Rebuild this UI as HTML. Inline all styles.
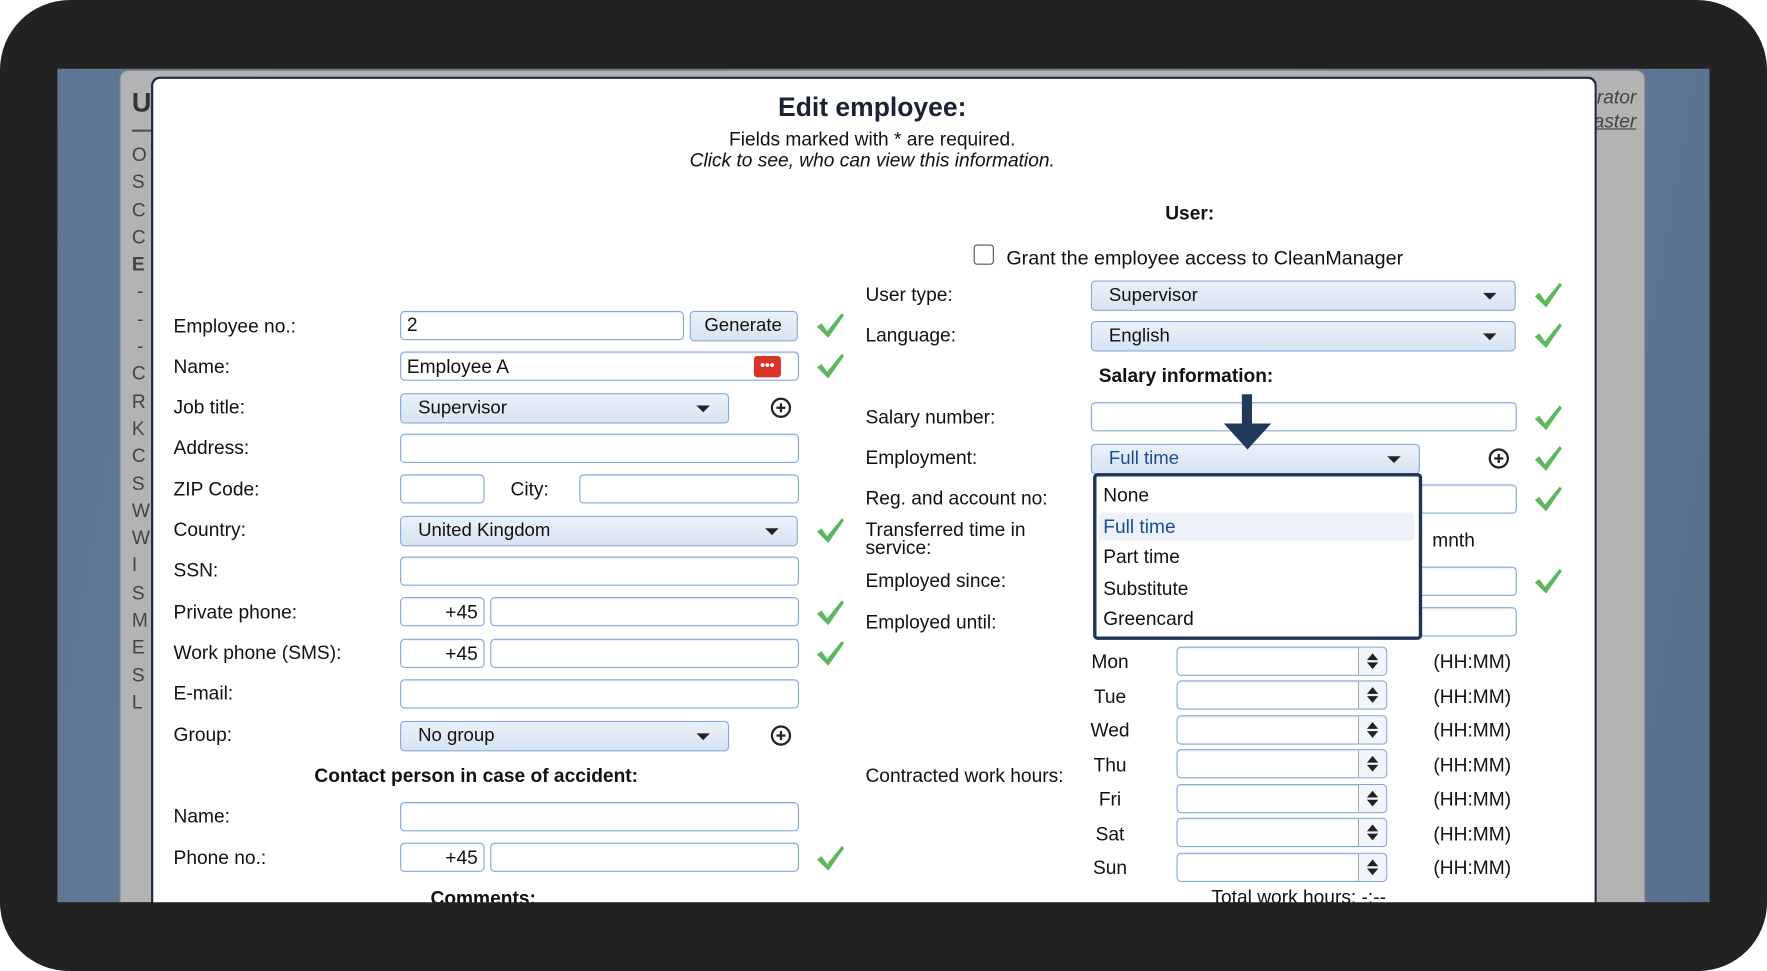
<!DOCTYPE html>
<html><head><meta charset="utf-8"><style>
html,body{margin:0;padding:0;width:1767px;height:971px;overflow:hidden;background:#fff}
#w{position:absolute;left:0;top:0;width:1568px;height:862px;transform:scale(1.12691,1.12645);transform-origin:0 0;font-family:"Liberation Sans",sans-serif;color:#111}
.a{position:absolute}
.frame{left:0;top:0;width:1568px;height:862px;background:#222;border-radius:62px}
.screen{left:51px;top:61px;width:1466px;height:740px;background:linear-gradient(100deg,#5d7594,#6d83a0 60%,#586f8e);overflow:hidden}
.page{left:55px;top:1px;width:1352px;height:760px;background:#b3b3b3;border-radius:8px 8px 0 0;border:1px solid #888}
.modal{left:134px;top:68px;width:1279px;height:740px;background:#fff;border:2px solid #1d2b44;border-bottom:none;border-radius:8px 8px 0 0}
.l{position:absolute;font-size:17px;line-height:18px;white-space:nowrap}
.in{position:absolute;height:24px;border:1px solid #86a7dd;border-radius:4px;background:#fff;box-shadow:inset 0 1px 1px #e8eef8}
.sel{position:absolute;border:1px solid #86a7dd;border-radius:4px;background:linear-gradient(#eaf1fa,#d8e4f3);font-size:16.5px;line-height:25px;padding-left:15px;box-sizing:border-box;height:27px}
.dd:after{content:"";position:absolute;right:16px;top:10px;border-left:6px solid transparent;border-right:6px solid transparent;border-top:6px solid #222}
.pl{position:absolute;width:18px;height:18px;border:2px solid #222;border-radius:50%;box-sizing:border-box}
.pl:before{content:"";position:absolute;left:3px;top:6px;width:8px;height:2px;background:#222}
.pl:after{content:"";position:absolute;left:6px;top:3px;width:2px;height:8px;background:#222}
.sp{position:absolute;right:0;top:0;width:24px;height:100%;border-left:1px solid #9ab;background:#f2f5fa;border-radius:0 4px 4px 0}
.sp:before{content:"";position:absolute;left:7px;top:5px;border-left:5px solid transparent;border-right:5px solid transparent;border-bottom:6px solid #222}
.sp:after{content:"";position:absolute;left:7px;bottom:5px;border-left:5px solid transparent;border-right:5px solid transparent;border-top:6px solid #222}
.b{font-weight:bold}
</style></head><body><div id="w">
<div class="a frame"></div>
<div class="a screen">
 <div class="a page">
  <div class="l b" style="left:10px;top:20px;font-size:24px;color:#333">U</div>
  <div class="a" style="left:10px;top:52px;width:20px;height:2px;background:#555"></div>
  <div class="l" style="left:10px;top:63px;color:#444;line-height:24.3px;font-size:17px">O<br>S<br>C<br>C<br><b>E</b><br>&nbsp;-<br>&nbsp;-<br>&nbsp;-<br>C<br>R<br>K<br>C<br>S<br>W<br>W<br>I<br>S<br>M<br>E<br>S<br>L</div>
  <div class="l" style="left:1305px;top:13px;font-style:italic;color:#444;font-size:17px;line-height:21px;text-align:right;width:40px">rator<br><u>aster</u></div>
 </div>
</div>
<div class="a modal"></div>
<div class="l b" style="left:0;width:1548px;text-align:center;top:82px;font-size:23.5px;line-height:26px;color:#1a2233">Edit employee:</div>
<div class="l" style="left:0;width:1548px;text-align:center;top:114px;line-height:19px">Fields marked with * are required.<br><i>Click to see, who can view this information.</i></div>

<!-- left column -->
<div class="l" style="left:154px;top:281px">Employee no.:</div>
<div class="in" style="left:355px;top:276px;width:250px"><span class="l" style="left:5px;top:3px">2</span></div>
<div class="sel" style="left:612px;top:276px;width:96px;padding-left:12px">Generate</div>
<div class="l" style="left:154px;top:317px">Name:</div>
<div class="in" style="left:355px;top:312px;width:352px"><span class="l" style="left:5px;top:4px">Employee A</span><span class="a" style="left:313px;top:3px;width:24px;height:19px;background:#d9342b;border-radius:3px;color:#fff;font-size:12px;line-height:16px;text-align:center;font-weight:bold">•••</span></div>
<div class="l" style="left:154px;top:353px">Job title:</div>
<div class="sel dd" style="left:355px;top:349px;width:292px">Supervisor</div>
<div class="pl" style="left:684px;top:353px"></div>
<div class="l" style="left:154px;top:389px">Address:</div>
<div class="in" style="left:355px;top:385px;width:352px"></div>
<div class="l" style="left:154px;top:426px">ZIP Code:</div>
<div class="in" style="left:355px;top:421px;width:73px"></div>
<div class="l" style="left:453px;top:426px">City:</div>
<div class="in" style="left:514px;top:421px;width:193px"></div>
<div class="l" style="left:154px;top:462px">Country:</div>
<div class="sel dd" style="left:355px;top:458px;width:353px">United Kingdom</div>
<div class="l" style="left:154px;top:498px">SSN:</div>
<div class="in" style="left:355px;top:494px;width:352px"></div>
<div class="l" style="left:154px;top:535px">Private phone:</div>
<div class="in" style="left:355px;top:530px;width:73px"><span class="l" style="right:5px;top:4px">+45</span></div>
<div class="in" style="left:435px;top:530px;width:272px"></div>
<div class="l" style="left:154px;top:571px">Work phone (SMS):</div>
<div class="in" style="left:355px;top:567px;width:73px"><span class="l" style="right:5px;top:4px">+45</span></div>
<div class="in" style="left:435px;top:567px;width:272px"></div>
<div class="l" style="left:154px;top:607px">E-mail:</div>
<div class="in" style="left:355px;top:603px;width:352px"></div>
<div class="l" style="left:154px;top:644px">Group:</div>
<div class="sel dd" style="left:355px;top:640px;width:292px">No group</div>
<div class="pl" style="left:684px;top:644px"></div>
<div class="l b" style="left:279px;top:680px">Contact person in case of accident:</div>
<div class="l" style="left:154px;top:716px">Name:</div>
<div class="in" style="left:355px;top:712px;width:352px"></div>
<div class="l" style="left:154px;top:753px">Phone no.:</div>
<div class="in" style="left:355px;top:748px;width:73px"><span class="l" style="right:5px;top:4px">+45</span></div>
<div class="in" style="left:435px;top:748px;width:272px"></div>
<div class="l b" style="left:382px;top:789px">Comments:</div>

<!-- right column -->
<div class="l b" style="left:1034px;top:181px">User:</div>
<div class="a" style="left:864px;top:217px;width:16px;height:16px;border:1px solid #555;border-radius:3px;background:#fff"></div>
<div class="l" style="left:893px;top:220px;font-size:17.5px">Grant the employee access to CleanManager</div>
<div class="l" style="left:768px;top:253px">User type:</div>
<div class="sel dd" style="left:968px;top:249px;width:377px">Supervisor</div>
<div class="l" style="left:768px;top:289px">Language:</div>
<div class="sel dd" style="left:968px;top:285px;width:377px">English</div>
<div class="l b" style="left:975px;top:325px">Salary information:</div>
<div class="l" style="left:768px;top:362px">Salary number:</div>
<div class="in" style="left:968px;top:357px;width:376px"></div>
<div class="l" style="left:768px;top:398px">Employment:</div>
<div class="sel dd" style="left:968px;top:394px;width:292px;color:#1a4d99">Full time</div>
<div class="pl" style="left:1321px;top:398px"></div>
<div class="l" style="left:768px;top:434px">Reg. and account no:</div>
<div class="in" style="left:1255px;top:430px;width:89px"></div>
<div class="l" style="left:768px;top:463px;line-height:16px">Transferred time in<br>service:</div>
<div class="l" style="left:1271px;top:471px">mnth</div>
<div class="l" style="left:768px;top:507px">Employed since:</div>
<div class="in" style="left:1255px;top:503px;width:89px"></div>
<div class="l" style="left:768px;top:544px">Employed until:</div>
<div class="in" style="left:1255px;top:539px;width:89px"></div>
<!-- dropdown -->
<div class="a" style="left:970px;top:420px;width:286px;height:142px;border:3px solid #1f3553;border-radius:4px;background:#fff"></div>
<div class="a" style="left:975px;top:455px;width:280px;height:25px;background:#edf2fa;border-radius:3px"></div>
<div class="l" style="left:979px;top:431px">None</div>
<div class="l" style="left:979px;top:459px;color:#1a4d99">Full time</div>
<div class="l" style="left:979px;top:486px">Part time</div>
<div class="l" style="left:979px;top:514px">Substitute</div>
<div class="l" style="left:979px;top:541px">Greencard</div>
<!-- arrow -->
<div class="a" style="left:1102px;top:350px;width:9px;height:28px;background:#223a5a"></div>
<div class="a" style="left:1086px;top:376px;border-left:21px solid transparent;border-right:21px solid transparent;border-top:23px solid #223a5a"></div>
<!-- hours -->
<div class="l" style="left:768px;top:680px">Contracted work hours:</div>
<div class="l" style="left:966px;top:573px;line-height:30.5px;text-align:center;width:38px">Mon<br>Tue<br>Wed<br>Thu<br>Fri<br>Sat<br>Sun</div>
<div class="l" style="left:1272px;top:573px;line-height:30.5px">(HH:MM)<br>(HH:MM)<br>(HH:MM)<br>(HH:MM)<br>(HH:MM)<br>(HH:MM)<br>(HH:MM)</div>
<div class="in" style="left:1044px;top:574px;width:185px"><div class="sp"></div></div>
<div class="in" style="left:1044px;top:604px;width:185px"><div class="sp"></div></div>
<div class="in" style="left:1044px;top:635px;width:185px"><div class="sp"></div></div>
<div class="in" style="left:1044px;top:665px;width:185px"><div class="sp"></div></div>
<div class="in" style="left:1044px;top:696px;width:185px"><div class="sp"></div></div>
<div class="in" style="left:1044px;top:726px;width:185px"><div class="sp"></div></div>
<div class="in" style="left:1044px;top:757px;width:185px"><div class="sp"></div></div>
<div class="l" style="left:1075px;top:788px">Total work hours: -:--</div>

<!-- checks -->
<svg class="a" style="left:0;top:0" width="1568" height="862">
<defs><path id="c" d="M0 12 L4 9 L9 16 L22 0 L24 2 L10 22 Z" fill="#5cb85c"/></defs>
<use href="#c" x="725" y="278"/><use href="#c" x="725" y="314"/><use href="#c" x="725" y="460"/>
<use href="#c" x="725" y="533"/><use href="#c" x="725" y="569"/><use href="#c" x="725" y="751"/>
<use href="#c" x="1362" y="251"/><use href="#c" x="1362" y="287"/><use href="#c" x="1362" y="360"/>
<use href="#c" x="1362" y="396"/><use href="#c" x="1362" y="432"/><use href="#c" x="1362" y="505"/>
</svg>
<!-- bottom mask -->
<div class="a" style="left:0;top:801px;width:1568px;height:61px;background:#222;border-radius:0 0 62px 62px"></div>
</div></body></html>
